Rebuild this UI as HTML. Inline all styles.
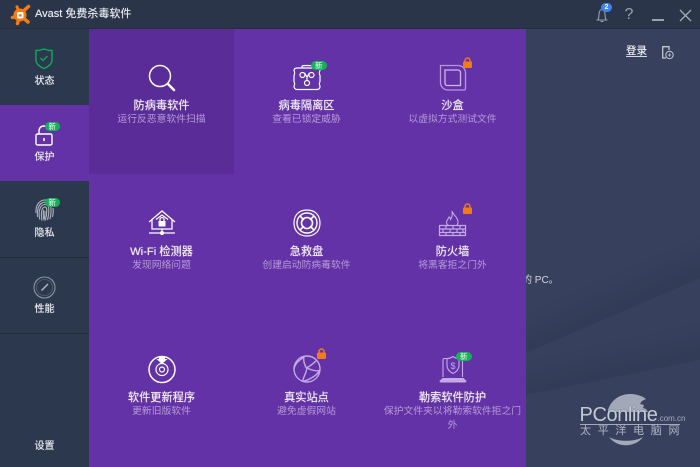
<!DOCTYPE html>
<html lang="zh">
<head>
<meta charset="utf-8">
<style>
*{margin:0;padding:0;box-sizing:border-box}
html,body{width:700px;height:467px;overflow:hidden;background:#37415d}
body{position:relative;font-family:"Liberation Sans","Noto Sans CJK SC",sans-serif;color:#fff}
.abs{position:absolute}
#main{left:0;top:0;width:700px;height:467px;background:#37415d}
#title{left:0;top:0;width:700px;height:29px;background:#2b3549;border-bottom:1px solid #252e40}
#side{left:0;top:29px;width:89px;height:438px;background:#2c384d}
.sep{left:0;width:89px;height:1px;background:#232c3d}
#act{left:0;top:105px;width:89px;height:76px;background:#6232a6}
#panel{left:89px;top:29px;width:437px;height:438px;background:#6232a6}
#hl{left:89px;top:29px;width:145px;height:145px;background:#5a2c98}
.nav{left:0;width:89px;text-align:center;font-size:10px;line-height:14px;color:#e6e8ec;text-shadow:0 0 .6px #e6e8ec}
.t{width:145px;text-align:center;font-size:11.2px;line-height:15px;color:#f3eef9;text-shadow:0 0 .6px #f3eef9;white-space:nowrap}
.s{width:145px;text-align:center;font-size:9.8px;line-height:13px;color:#b79bd8;white-space:nowrap}
.badge{width:15.500px;height:9px;border-radius:5px;background:#14b158;color:#fff;font-size:7.500px;line-height:9px;text-align:center}
svg{position:absolute;overflow:visible}
</style>
</head>
<body>
<div class="abs" id="main"></div>
<svg style="left:526px;top:29px" width="174" height="438">
<defs>
<linearGradient id="g1" gradientUnits="userSpaceOnUse" x1="87" y1="286" x2="71" y2="250"><stop offset="0" stop-color="#2c3650" stop-opacity=".5"/><stop offset="1" stop-color="#2c3650" stop-opacity="0"/></linearGradient>
<linearGradient id="g2" gradientUnits="userSpaceOnUse" x1="87" y1="348" x2="79" y2="312"><stop offset="0" stop-color="#2c3650" stop-opacity=".5"/><stop offset="1" stop-color="#2c3650" stop-opacity="0"/></linearGradient>
</defs>
<path d="M0 324L174 249V190L0 260Z" fill="url(#g1)"/>
<path d="M0 366L174 331V280L0 320Z" fill="url(#g2)"/>
</svg>
<div class="abs" style="left:522px;top:274px;font-size:10px;line-height:13px;color:#d5d8df;white-space:nowrap">的 PC。</div>
<div class="abs" id="title"></div>
<div class="abs" id="side"></div>
<div class="abs sep" style="top:105px"></div>
<div class="abs sep" style="top:257px"></div>
<div class="abs sep" style="top:333px"></div>
<div class="abs" id="act"></div>
<div class="abs" id="panel"></div>
<div class="abs" id="hl"></div>

<!-- logo -->
<svg style="left:10px;top:4px" width="22" height="22" viewBox="0 0 22 22"><g stroke="#f47b16" stroke-linecap="round" fill="none"><path d="M10 10L18.500 2.500" stroke-width="3.500"/><path d="M10 11L18 18" stroke-width="3.500"/><path d="M10 11L2.500 13.500" stroke-width="3.500"/><path d="M10 11L7 2.800" stroke-width="3"/><path d="M10 11L7.500 19.500" stroke-width="3.500"/></g><circle cx="10" cy="11" r="6.500" fill="#f47b16"/><rect x="7" y="8" width="6.500" height="6.500" rx="1.500" fill="#fff"/><rect x="8.800" y="10.300" width="2.800" height="2.200" fill="#f47b16"/></svg>
<div class="abs" style="left:35px;top:7px;font-size:11px;line-height:15px;color:#e8eaee;white-space:nowrap;text-shadow:0 0 .4px #e8eaee">Avast 免费杀毒软件</div>

<!-- titlebar right -->
<svg style="left:594px;top:4px" width="16" height="18" fill="none" stroke="#9aa1ae" stroke-width="1.100"><path d="M2.500 16h11M4 16c1-2 .8-3.500 1-6 .2-2.500 1.300-4.500 3-4.500s2.800 2 3 4.500c.2 2.500 0 4 1 6M6.500 17.500h3"/></svg>
<div class="abs" style="left:601px;top:3px;width:11px;height:9px;border-radius:5px;background:#3d83ea;font-size:7px;line-height:9px;text-align:center;font-weight:bold">2</div>
<div class="abs" style="left:622px;top:6px;width:14px;text-align:center;font-size:16px;line-height:18px;color:#9ba2af">?</div>
<div class="abs" style="left:652px;top:19px;width:12px;height:1.500px;background:#9aa1ae"></div>
<svg style="left:679px;top:9px" width="13" height="13" stroke="#a3a9b5" stroke-width="1.300"><path d="M1 1L12 12M12 1L1 12"/></svg>

<div class="abs" style="left:626px;top:44px;font-size:10.500px;line-height:14px;color:#eef0f3;border-bottom:1px solid #d5d8de;height:13px;text-shadow:0 0 .4px #eef0f3">登录</div>
<svg style="left:661px;top:45px" width="14" height="15" fill="none" stroke="#c3c7cf" stroke-width="1.300"><path d="M8 5V1.700H1.700v11.300H5"/><circle cx="8.500" cy="10" r="3.700" stroke-width="1"/><path d="M6.800 10h3.400M8.500 8.300v3.400" stroke-width=".8"/></svg>

<!-- nav -->
<svg style="left:35px;top:48px" width="18" height="22" fill="none" stroke="#12a756" stroke-width="1.400"><path d="M1 2.500C4 2.500 6.500 2 9 1c2.500 1 5 1.500 8 1.500V12c0 4-4 7-8 8.500C5 19 1 16 1 12Z"/><path d="M5.500 10l2.500 2.500 4.500-4.500"/></svg>
<div class="abs nav" style="top:75px">状态</div>

<svg style="left:35px;top:124px" width="18" height="22" fill="none" stroke="#fff" stroke-width="1.400"><rect x="1" y="10" width="16" height="11" rx="1.500"/><path d="M4 10V7c0-3 2-5 5-5s4 1.500 4.500 3"/><path d="M9 14v3" stroke-width="1.600"/></svg>
<div class="abs badge" style="left:44.500px;top:121.500px">新</div>
<div class="abs nav" style="top:151px">保护</div>

<svg style="left:35px;top:199px" width="19" height="23" fill="none" stroke="#b0b5bf" stroke-width="1.100"><path d="M1 14C.5 8 3 1.500 9.500 1c4-.3 7 1.500 8.500 5"/><path d="M2.500 18C1.800 11 3.500 4 9.500 3.200c3.800-.5 6.300 2 6.500 6 .2 4-.2 8-1.200 11"/><path d="M4.800 20.500c-1.300-6-1-14 4.700-15 3-.3 4.200 2 4.300 4.500.1 3.500-.3 7-1.300 11"/><path d="M7 21.500C6 16 6 9 9.500 8c2-.2 2.300 1.500 2.300 3 0 3.500-.5 7-1.500 10.500"/><path d="M9 21.500c-.6-3.500-1.200-7-.3-10.500M10 12c0 3-.2 5-.7 8"/><path d="M18 9c.5 3 .2 6-.6 9"/></svg>
<div class="abs badge" style="left:44.500px;top:197.500px">新</div>
<div class="abs nav" style="top:227px">隐私</div>

<svg style="left:33px;top:276px" width="23" height="23" fill="none" stroke="#8f96a3" stroke-width="1.100"><circle cx="11.500" cy="11.500" r="10.500"/><circle cx="11.500" cy="11.500" r="8" stroke-width=".6" opacity=".6"/><path d="M8.500 14.500L15 8" stroke="#b3b8c2" stroke-width="1.500"/></svg>
<div class="abs nav" style="top:303px">性能</div>
<div class="abs nav" style="top:440px">设置</div>

<!-- row 1 -->
<svg style="left:148px;top:64px" width="28" height="28" fill="none" stroke="#fff" stroke-width="1.500"><circle cx="12" cy="12" r="10.500"/><path d="M20 20l6 6" stroke-width="2.500" stroke-linecap="round"/></svg>
<div class="abs t" style="left:89px;top:98.500px">防病毒软件</div>
<div class="abs s" style="left:89px;top:113px">运行反恶意软件扫描</div>

<svg style="left:293px;top:64px" width="28" height="27" fill="none" stroke="#fff" stroke-width="1.200"><path d="M9 4V2.500C9 1.500 11 1.500 14 1.500s5 0 5 1V4"/><path d="M4 4h20c2 0 3 1 3 2.500-1 2-1 3 0 5v6c-1 2-1 3 0 4.500 0 2-1 3.500-3 3.500H4c-2 0-3-1.500-3-3.500 1-1.500 1-2.500 0-4.500v-6c1-2 1-3 0-5C1 5 2 4 4 4Z"/><circle cx="9.500" cy="11" r="2.500"/><circle cx="18.500" cy="11" r="2.500"/><circle cx="14" cy="19" r="2.500"/><path d="M11.500 9l2.500 4 2.500-4M14 13v3.500"/></svg>
<div class="abs badge" style="left:311px;top:60.500px">新</div>
<div class="abs t" style="left:234px;top:98.500px">病毒隔离区</div>
<div class="abs s" style="left:234px;top:113px">查看已锁定威胁</div>

<svg style="left:439px;top:64px" width="28" height="27" fill="none" stroke="#b697de" stroke-width="1.300"><path d="M1.500 1.500H19c4 0 7.500 3 7.500 7.500v15.500c0 1-1 1.500-2 1.500H9C5 26 1.500 23 1.500 18.500Z"/><path d="M6 6h13c1.500 0 2.500 1 2.500 2.500v13H8c-1 0-2-1-2-2Z" stroke="#cdb8ea"/></svg>
<svg style="left:461.500px;top:57px" width="11" height="12"><path d="M3 5V3.500a2.500 2.500 0 0 1 5 0V5" fill="none" stroke="#f47b16" stroke-width="1.400"/><rect x="1" y="4.500" width="9" height="6.500" rx="1" fill="#f47b16"/></svg>
<div class="abs t" style="left:380px;top:98.500px">沙盒</div>
<div class="abs s" style="left:380px;top:113px">以虚拟方式测试文件</div>

<!-- row 2 -->
<svg style="left:148px;top:210px" width="28" height="26" fill="none" stroke="#fff" stroke-width="1.300"><path d="M1 12L14 1l13 11"/><path d="M4 9.500V19h20V9.500"/><path d="M8 9.500L14 5l6 4.500"/><rect x="10.500" y="11" width="7" height="5.500" fill="#fff" stroke="none"/><path d="M12 11V9.500a2 2 0 0 1 4 0V11"/><path d="M1 23h26M14 19v4"/><circle cx="14" cy="23" r="1.500" fill="#fff"/></svg>
<div class="abs t" style="left:89px;top:244.500px">Wi-Fi 检测器</div>
<div class="abs s" style="left:89px;top:259px">发现网络问题</div>

<svg style="left:293px;top:209px" width="28" height="28" fill="none" stroke="#fff" stroke-width="1.200"><path d="M14 1c8 0 13 5 13 13s-5 13-13 13S1 22 1 14 6 1 14 1Z"/><circle cx="14" cy="14" r="10" stroke-width="1.400"/><circle cx="14" cy="14" r="5.500" stroke-width="1.600"/><path d="M7 7l4 4M21 7l-4 4M7 21l4-4M21 21l-4-4" stroke-width="1.600"/></svg>
<div class="abs t" style="left:234px;top:244.500px">急救盘</div>
<div class="abs s" style="left:234px;top:259px">创建启动防病毒软件</div>

<svg style="left:439px;top:210px" width="27" height="27" fill="none" stroke="#c4abe6" stroke-width="1.100"><path d="M13 1c1 4 6 6 6 11 0 2-1 3.500-1.500 3.500H9.500C8.500 15 7.500 13.500 7.500 12c0-2 2-3 2.500-5 1 .5 1.500 1.500 1.500 2.500C13 7.500 13.500 4 13 1Z"/><path d="M.5 15.500h26v10H.5zM.5 19h26M.5 22.500h26M7 15.500V19M14 15.500V19M21 15.500V19M4 19v3.500M11 19v3.500M18 19v3.500M24 19v3.500M7 22.500v3M14 22.500v3M21 22.500v3" stroke-width="1.200"/></svg>
<svg style="left:461.500px;top:203px" width="11" height="12"><path d="M3 5V3.500a2.500 2.500 0 0 1 5 0V5" fill="none" stroke="#f47b16" stroke-width="1.400"/><rect x="1" y="4.500" width="9" height="6.500" rx="1" fill="#f47b16"/></svg>
<div class="abs t" style="left:380px;top:244.500px">防火墙</div>
<div class="abs s" style="left:380px;top:259px">将黑客拒之门外</div>

<!-- row 3 -->
<svg style="left:148px;top:355px" width="28" height="28" fill="none" stroke="#fff" stroke-width="1.500"><circle cx="14" cy="14.500" r="13"/><circle cx="14" cy="14.500" r="6" stroke-width="1.200"/><circle cx="14" cy="14.500" r="2.500" stroke-width="1.200"/><path d="M11 1h6v3h2.500L14 9 8.500 4H11Z" fill="#fff" stroke="none"/></svg>
<div class="abs t" style="left:89px;top:390.500px">软件更新程序</div>
<div class="abs s" style="left:89px;top:405px">更新旧版软件</div>

<svg style="left:293px;top:355px" width="28" height="28" fill="none" stroke="#c4abe6" stroke-width="1.400"><circle cx="14" cy="14" r="13"/><path d="M11 2c-1 4 1 9 2.500 11S9 24 10 26.500M13.500 13C17 11 22 7 24 5M13.500 13c3 1 9 4 13 2.500M26.500 15.500C24 20 18 24 10 26.500M11 2C7 5 2 8 1 14"/></svg>
<svg style="left:316px;top:348px" width="11" height="12"><path d="M3 5V3.500a2.500 2.500 0 0 1 5 0V5" fill="none" stroke="#f47b16" stroke-width="1.400"/><rect x="1" y="4.500" width="9" height="6.500" rx="1" fill="#f47b16"/></svg>
<div class="abs t" style="left:234px;top:390.500px">真实站点</div>
<div class="abs s" style="left:234px;top:405px">避免虚假网站</div>

<svg style="left:439px;top:355px" width="28" height="28" fill="none" stroke="#c4abe6" stroke-width="1.100"><path d="M4 22V5c0-1 .5-1.500 1.500-1.500H9M19 3.500h3c1 0 1.500.5 1.500 1.500v17"/><path d="M14 1.500c2 1.500 4 2 6 2v7c0 4-3 6.500-6 8-3-1.500-6-4-6-8v-7c2 0 4-.5 6-2Z"/><path d="M3.500 23h21l3 3c0 .8-.5 1.500-1.500 1.500H2C1 27.500.5 26.800.5 26Z" fill="#c4abe6" stroke="none"/><text x="14" y="14" font-size="9" font-family="Liberation Sans" fill="#c4abe6" stroke="none" text-anchor="middle">$</text></svg>
<div class="abs badge" style="left:456px;top:352px">新</div>
<div class="abs t" style="left:380px;top:390.500px">勒索软件防护</div>
<div class="abs s" style="left:380px;top:405px">保护文件夹以将勒索软件拒之门</div>
<div class="abs s" style="left:380px;top:419px">外</div>

<!-- watermark -->
<svg style="left:570px;top:385px" width="120" height="70"><path d="M38 25C41 15 50 9 60 9c7 0 12 2 16 5l-4 2-2 3 4 1-1 3 3 1 2 3H38Z" fill="#a2a8b8"/><path d="M39 52c8 11 26 11 34 0-8 5-26 5-34 0Z" fill="#a4aaba"/><rect x="10" y="39" width="100" height="1" fill="#a4aaba"/></svg>
<div class="abs" style="left:579.500px;top:404px;font-size:20px;line-height:22px;color:#c5c9d3;letter-spacing:-.4px;white-space:nowrap;text-shadow:0 0 1px #37415d">PConline<span style="font-size:8px;letter-spacing:0;color:#a9aebc">.com.cn</span></div>
<div class="abs" style="left:580px;top:424px;font-size:11px;line-height:14px;letter-spacing:6.700px;color:#b0b5c3;white-space:nowrap">太平洋电脑网</div>
</body>
</html>
